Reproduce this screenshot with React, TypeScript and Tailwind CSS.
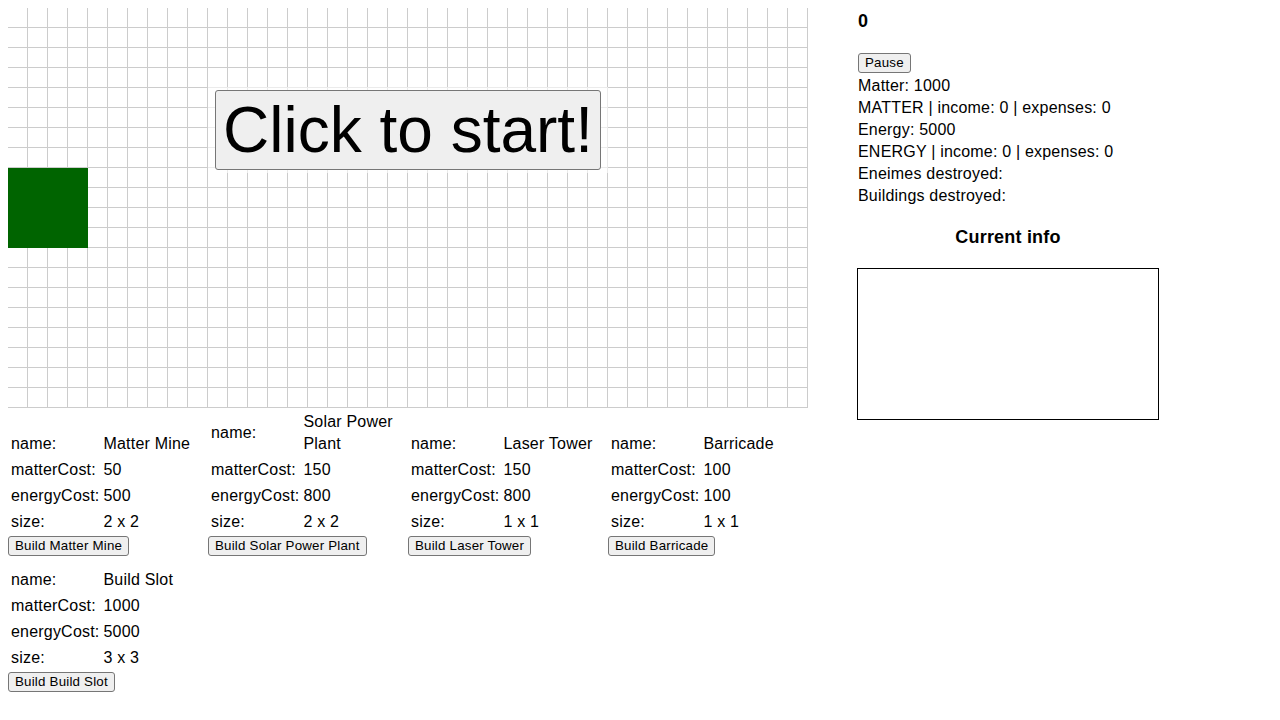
import React from 'react'

interface Building {
  name: string
  matterCost: number
  energyCost: number
  size: string
}

const BUILDINGS: Building[] = [
  { name: 'Matter Mine', matterCost: 50, energyCost: 500, size: '2 x 2' },
  { name: 'Solar Power Plant', matterCost: 150, energyCost: 800, size: '2 x 2' },
  { name: 'Laser Tower', matterCost: 150, energyCost: 800, size: '1 x 1' },
  { name: 'Barricade', matterCost: 100, energyCost: 100, size: '1 x 1' },
  { name: 'Build Slot', matterCost: 1000, energyCost: 5000, size: '3 x 3' },
]

const COLS = 40
const ROWS = 20

const btn =
  "h-[20px] px-[6px] text-[13.33px] leading-none font-['Liberation_Sans',Arial,sans-serif] text-black bg-[#efefef] border border-[#767676] rounded-[3px]"

function Board() {
  return (
    <div className="relative w-[800px] h-[400px]">
      <div className="grid grid-cols-[repeat(40,20px)]">
        {Array.from({ length: COLS * ROWS }, (_, i) => (
          <div key={i} className="w-5 h-5 border-r border-b border-[#cccccc]" />
        ))}
      </div>
      {/* starting matter mine */}
      <div className="absolute left-0 top-[160px] w-20 h-20 bg-[#006400]" />
      <div className="absolute left-[200px] top-[79px] w-[400px] h-[86px] bg-white/60 flex items-center justify-center">
        <button className="w-[386px] h-[80px] px-[7px] text-[64px] leading-none tracking-normal font-['Liberation_Sans',Arial,sans-serif] text-black bg-[#efefef] border border-[#767676] rounded-[3px]">
          Click to start!
        </button>
      </div>
    </div>
  )
}

function BuildingCard({ b }: { b: Building }) {
  const rows: [string, string | number][] = [
    ['name:', b.name],
    ['matterCost:', b.matterCost],
    ['energyCost:', b.energyCost],
    ['size:', b.size],
  ]
  return (
    <div className="w-[200px] flex flex-col items-start">
      <table className="border-separate border-spacing-[2px] leading-[22px]">
        <tbody>
          {rows.map(([k, v]) => (
            <tr key={k}>
              <td className="p-px align-middle">{k}</td>
              <td className="p-px align-middle">{v}</td>
            </tr>
          ))}
        </tbody>
      </table>
      <button className={btn}>Build {b.name}</button>
    </div>
  )
}

export default function App() {
  return (
    <div className="p-2 flex text-[16px] tracking-[0.2px] text-black bg-white min-h-[720px] font-['Liberation_Sans',Arial,sans-serif]">
      <div className="w-[800px] shrink-0">
        <Board />
        <div className="flex flex-wrap items-end gap-y-[10px]">
          {BUILDINGS.map(b => (
            <BuildingCard key={b.name} b={b} />
          ))}
        </div>
      </div>

      <div className="ml-[50px] w-[300px] flex flex-col items-start">
        <h3 className="text-[18px] font-bold leading-[26px]">0</h3>
        <button className={`mt-[19px] ${btn}`}>Pause</button>
        <div className="mt-[2px] leading-[22px] self-stretch">
          <div>Matter: 1000</div>
          <div>MATTER | income: 0 | expenses: 0</div>
          <div>Energy: 5000</div>
          <div>ENERGY | income: 0 | expenses: 0</div>
          <div>Eneimes destroyed:</div>
          <div>Buildings destroyed:</div>
        </div>
        <h3 className="mt-[17px] self-stretch text-[18px] font-bold leading-[26px] text-center">Current info</h3>
        <div className="mt-[18px] self-stretch -mx-px h-[152px] border border-black" />
      </div>
    </div>
  )
}
